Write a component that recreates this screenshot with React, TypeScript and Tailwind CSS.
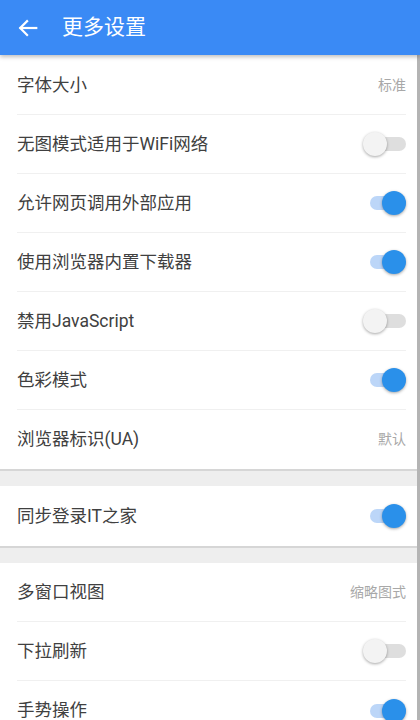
import React from "react";

type Row = { label: string; value?: string; toggle?: boolean };

const Toggle = ({ on }: { on: boolean }) => (
  <div className="relative w-[43px] h-[24px] flex items-center">
    <div className={`ml-[7px] w-[36px] h-[14px] rounded-full ${on ? "bg-[#bcd6f8]" : "bg-[#dedede]"}`} />
    <div
      className={`absolute top-0 w-[24px] h-[24px] rounded-full shadow-[0_1px_3px_rgba(0,0,0,0.35)] ${
        on ? "left-[19px] bg-[#2a90ea]" : "left-0 bg-[#f3f3f3]"
      }`}
    />
  </div>
);

const Section = ({ rows, h = "h-[59px]" }: { rows: Row[]; h?: string }) => (
  <div className="bg-white">
    {rows.map((r, i) => (
      <div key={i} className="pl-[17px] pr-[14px]">
        <div
          className={`${h} flex items-center justify-between ${
            i < rows.length - 1 ? "border-b border-[#f0f0f0]" : ""
          }`}
        >
          <span className="text-[17.5px] text-[#404040]">{r.label}</span>
          {r.value !== undefined ? (
            <span className="text-[14px] text-[#a8a8a8]">{r.value}</span>
          ) : (
            <Toggle on={!!r.toggle} />
          )}
        </div>
      </div>
    ))}
  </div>
);

const Gap = () => (
  <div className="h-[17px] bg-[#eeeeee] border-t-2 border-[#d6d6d6]" />
);

export default function App() {
  return (
    <div
      className="w-[420px] h-[720px] overflow-hidden bg-white relative"
      style={{ fontFamily: '"Roboto", "Noto Sans CJK SC", sans-serif' }}
    >
      <div className="h-[55px] bg-[#3a8af5] flex items-center relative z-10 shadow-[0_2px_4px_rgba(0,0,0,0.25)]">
        <svg className="ml-[17px]" width="22" height="22" viewBox="0 0 24 24" fill="none" stroke="white" strokeWidth="2.4" strokeLinecap="square">
          <path d="M21 12H4" />
          <path d="M11 4.5L3.5 12L11 19.5" strokeLinejoin="miter" />
        </svg>
        <span className="ml-[23px] text-white text-[21px]">更多设置</span>
      </div>
      <div className="relative pt-[1px]">
        <Section
          rows={[
            { label: "字体大小", value: "标准" },
            { label: "无图模式适用于WiFi网络", toggle: false },
            { label: "允许网页调用外部应用", toggle: true },
            { label: "使用浏览器内置下载器", toggle: true },
            { label: "禁用JavaScript", toggle: false },
            { label: "色彩模式", toggle: true },
            { label: "浏览器标识(UA)", value: "默认" },
          ]}
        />
        <Gap />
        <Section h="h-[60px]" rows={[{ label: "同步登录IT之家", toggle: true }]} />
        <Gap />
        <Section
          rows={[
            { label: "多窗口视图", value: "缩略图式" },
            { label: "下拉刷新", toggle: false },
            { label: "手势操作", toggle: true },
          ]}
        />
        <div className="absolute right-0 top-0 w-[3px] h-[720px] bg-[#b4b4b4]" />
      </div>
    </div>
  );
}
